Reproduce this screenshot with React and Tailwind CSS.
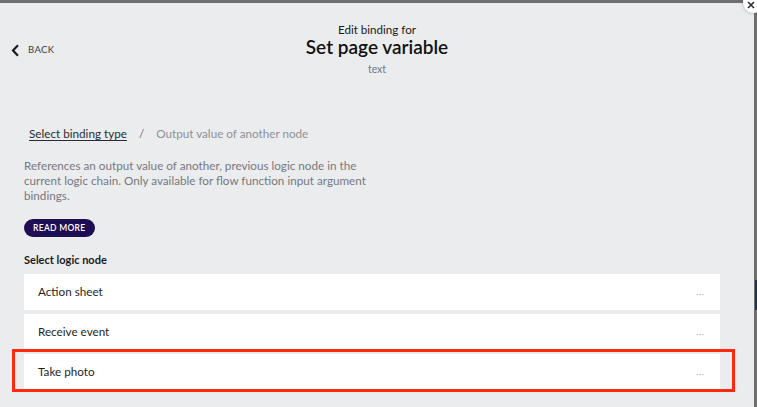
import React from "react";

const rows = ["Action sheet", "Receive event", "Take photo"];

export default function App() {
  return (
    <div
      className="w-[757px] h-[407px] overflow-hidden bg-[#6f6f70] relative"
      style={{ fontFamily: "Lato, 'Noto Sans', sans-serif" }}
    >
      <div className="absolute left-0 top-[3px] w-[754px] h-[404px] bg-[#ebecee] flex flex-col">
        {/* header */}
        <div className="relative flex flex-col items-center pt-[19px] h-[100px]">
          <div className="text-[11.6px] leading-[15px] text-[#1a1a1a]">Edit binding for</div>
          <div className="text-[19px] leading-[22px] font-semibold text-[#111] mt-[-1px]">Set page variable</div>
          <div className="text-[10.5px] leading-[14px] text-[#6b7a90] mt-[4px]">text</div>
          <div className="absolute left-[11px] top-[40px] flex items-center gap-[8px]">
            <svg width="9" height="13" viewBox="0 0 9 13">
              <path d="M7 1.2 L2 6.5 L7 11.8" stroke="#1b1b1f" strokeWidth="2.2" fill="none" />
            </svg>
            <span className="text-[9.5px] tracking-[0.4px] text-[#3a3d46]">BACK</span>
          </div>
        </div>

        {/* content */}
        <div className="flex flex-col px-[24px] pt-[23px]">
          <div className="flex items-center text-[11.7px] leading-[14px] pl-[5px]">
            <span className="underline underline-offset-2 text-[#2a2d36]">Select binding type</span>
            <span className="text-[#6b6e76] mx-[12px]">/</span>
            <span className="text-[#8e9098]">Output value of another node</span>
          </div>
          <p className="mt-[18px] text-[11.7px] leading-[15px] text-[#76787f] w-[364px]">
            References an output value of another, previous logic node in the current logic chain. Only available for flow function input argument bindings.
          </p>
          <div className="mt-[10px]">
            <button className="h-[18px] px-[9px] rounded-full bg-[#1f0d54] text-white text-[8.5px] font-semibold tracking-[0.3px] leading-[18px]">
              READ MORE
            </button>
          </div>
          <div className="mt-[16px] text-[11px] leading-[13px] font-bold text-[#1a1a1a]">Select logic node</div>
          <div className="mt-[8px] flex flex-col gap-[4px] w-[696px]">
            {rows.map((r, i) => (
              <div key={r} className="relative h-[36px] bg-white flex items-center justify-between pl-[14px] pr-[15px]">
                <span className="text-[11.7px] text-[#1e1f24]">{r}</span>
                <span className="text-[8px] text-[#8a8a8a] tracking-[1px]">...</span>
                {i === 2 && (
                  <div className="absolute left-[-12px] right-[-15px] top-[-5px] bottom-[-2px] border-[3px] border-[#ff2a0e] pointer-events-none" />
                )}
              </div>
            ))}
          </div>
        </div>
      </div>
      {/* close button */}
      <div className="absolute left-[743px] top-[-9px] w-[22px] h-[22px] rounded-full bg-white shadow-[0_0_4px_rgba(0,0,0,0.25)] flex items-center justify-center">
        <svg width="10" height="10" viewBox="0 0 10 10" className="translate-x-[-3px] translate-y-[3px]">
          <path d="M2 2 L8 8 M8 2 L2 8" stroke="#2a2d36" strokeWidth="1.6" />
        </svg>
      </div>
      {/* scrollbar thumb */}
      <div className="absolute left-[755px] top-[280px] w-[2px] h-[30px] bg-[#1f3550]" />
    </div>
  );
}
